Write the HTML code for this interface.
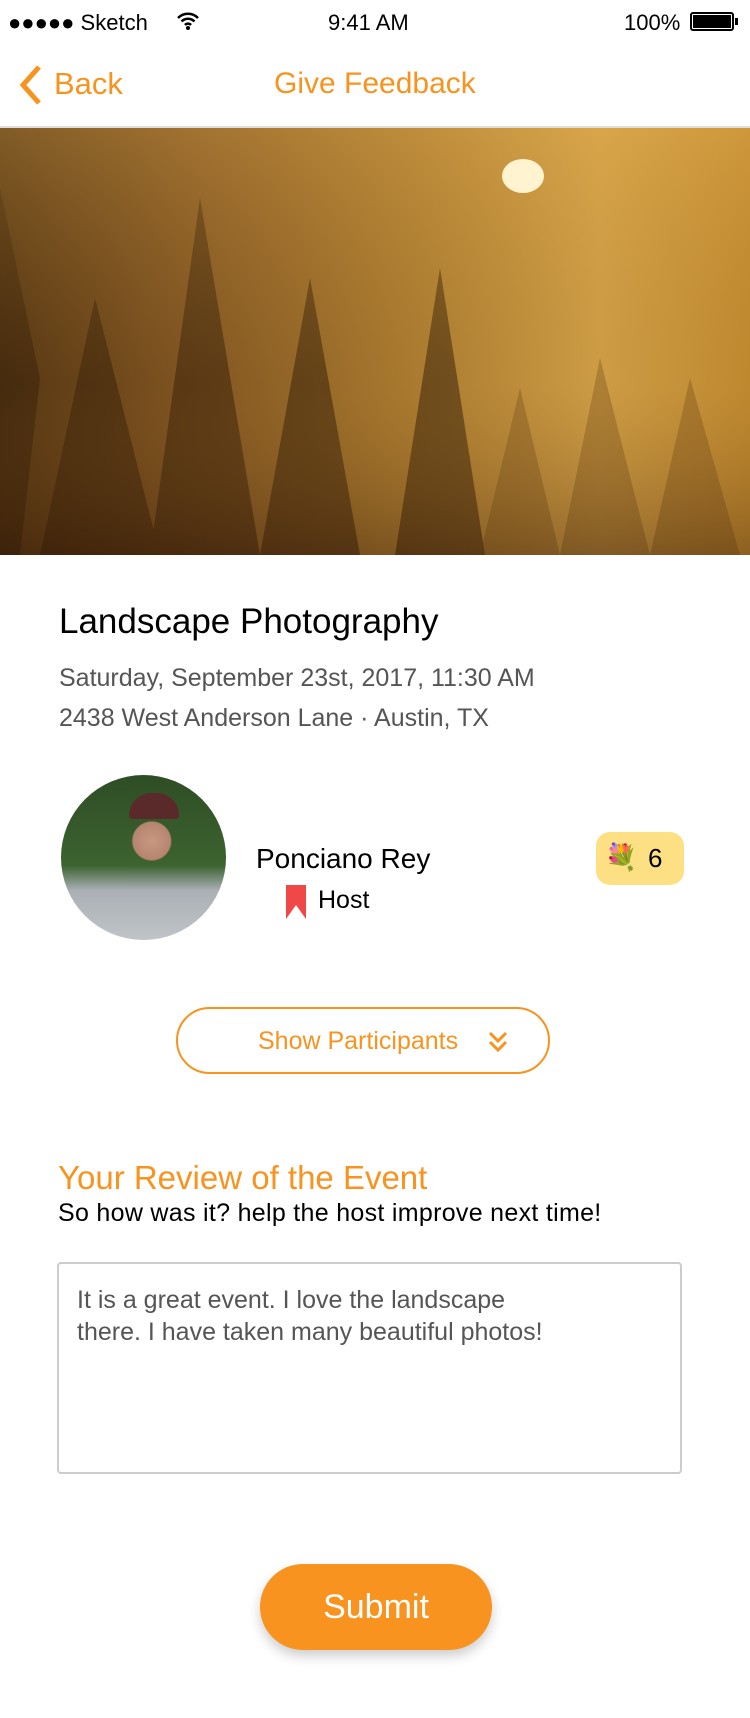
<!DOCTYPE html>
<html><head><meta charset="utf-8"><style>
*{margin:0;padding:0;box-sizing:border-box}
body{width:750px;height:1718px;background:#fff;font-family:"Liberation Sans",sans-serif;position:relative;overflow:hidden}
.a{position:absolute;white-space:nowrap}
.or{color:#f7931e}
</style></head><body>
<div class="a" style="left:8px;top:10px;font-size:22px;color:#000">●●●●● Sketch</div>
<svg class="a" style="left:176px;top:11px" width="24" height="20" viewBox="0 0 24 20"><path d="M2 7a14 14 0 0 1 20 0M5.5 10.5a9 9 0 0 1 13 0M9 14a4 4 0 0 1 6 0" stroke="#000" stroke-width="2.5" fill="none"/><circle cx="12" cy="17" r="2" fill="#000"/></svg>
<div class="a" style="left:328px;top:10px;font-size:22px">9:41 AM</div>
<div class="a" style="left:624px;top:10px;font-size:22px">100%</div>
<div class="a" style="left:690px;top:12px;width:44px;height:19px;border:2px solid #000;border-radius:3px;padding:1px"><div style="background:#000;width:100%;height:100%"></div></div>
<div class="a" style="left:735px;top:18px;width:3px;height:7px;background:#000"></div>
<svg class="a" style="left:15px;top:64px" width="30" height="42" viewBox="0 0 30 42"><path d="M24 3 8 21l16 18" stroke="#f7931e" stroke-width="5" fill="none"/></svg>
<div class="a or" style="left:54px;top:66px;font-size:31px">Back</div>
<div class="a or" style="left:274px;top:67px;font-size:30px">Give Feedback</div>
<div class="a" style="left:0;top:126px;width:750px;height:2px;background:#ddd"></div>
<div class="a" style="left:0;top:128px;width:750px;height:427px;background:linear-gradient(90deg,#4a2e10 0%,#7a5020 25%,#a87a30 55%,#d0a048 80%,#c08a30 100%);overflow:hidden">
<svg class="a" style="left:0;top:0" width="750" height="427"><defs><linearGradient id="f" x1="0" y1="0" x2="0" y2="1"><stop offset="0" stop-color="#e8b050" stop-opacity=".35"/><stop offset=".6" stop-color="#b07828" stop-opacity=".1"/><stop offset="1" stop-color="#402008" stop-opacity=".4"/></linearGradient></defs>
<g fill="#2e1a08" opacity=".55"><path d="M0 60 40 250 20 427H0z"/><path d="M200 70 150 427h110z"/><path d="M95 170 40 427h120z"/><path d="M310 150 260 427h100z"/><path d="M440 140 395 427h90z"/></g><g fill="#6b4518" opacity=".35"><path d="M600 230 560 427h90z"/><path d="M690 250 650 427h90z"/><path d="M520 260 480 427h80z"/></g>
<rect width="750" height="427" fill="url(#f)"/>
<ellipse cx="523" cy="48" rx="21" ry="17" fill="#fff4cf"/></svg>
</div>
<div class="a" style="left:59px;top:602px;font-size:35px;color:#000">Landscape Photography</div>
<div class="a" style="left:59px;top:664px;font-size:25px;color:#555">Saturday, September 23st, 2017, 11:30 AM</div>
<div class="a" style="left:59px;top:704px;font-size:25px;color:#555">2438 West Anderson Lane · Austin, TX</div>
<div class="a" style="left:61px;top:775px;width:165px;height:165px;border-radius:50%;background:radial-gradient(circle at 55% 40%,#c99880 0,#b58570 14%,transparent 15%),linear-gradient(180deg,#2e4d25 0%,#3d6330 55%,#aab0b5 70%,#c0c4c8 100%);overflow:hidden"><div class="a" style="left:68px;top:18px;width:50px;height:26px;border-radius:25px 25px 4px 4px;background:#5a2a2a"></div></div>
<div class="a" style="left:256px;top:843px;font-size:28px;color:#000">Ponciano Rey</div>
<svg class="a" style="left:286px;top:885px" width="20" height="34"><path d="M0 0h20v34L10 20 0 34z" fill="#f04848"/></svg>
<div class="a" style="left:318px;top:886px;font-size:25px;color:#000">Host</div>
<div class="a" style="left:596px;top:832px;width:88px;height:53px;border-radius:14px;background:#fde083"></div>
<div class="a" style="left:605px;top:842px;font-size:26px">💐</div>
<div class="a" style="left:648px;top:843px;font-size:26px">6</div>
<div class="a" style="left:176px;top:1007px;width:374px;height:67px;border:2px solid #f7931e;border-radius:34px"></div>
<div class="a or" style="left:258px;top:1027px;font-size:25px">Show Participants</div>
<svg class="a" style="left:487px;top:1030px" width="22" height="24"><path d="M3 3l8 8 8-8M3 12l8 8 8-8" stroke="#f7931e" stroke-width="3" fill="none"/></svg>
<div class="a or" style="left:58px;top:1159px;font-size:33px">Your Review of the Event</div>
<div class="a" style="left:58px;top:1199px;font-size:25px;color:#000;letter-spacing:.3px">So how was it? help the host improve next time!</div>
<div class="a" style="left:57px;top:1262px;width:625px;height:212px;border:2px solid #ccc;border-radius:4px"></div>
<div class="a" style="left:77px;top:1284px;font-size:25px;color:#555;line-height:32px">It is a great event. I love the landscape<br>there. I have taken many beautiful photos!</div>
<div class="a" style="left:260px;top:1564px;width:232px;height:86px;border-radius:43px;background:#f7931e;box-shadow:0 6px 12px rgba(0,0,0,.2);color:#fff;font-size:34px;text-align:center;line-height:86px">Submit</div>
</body></html>
